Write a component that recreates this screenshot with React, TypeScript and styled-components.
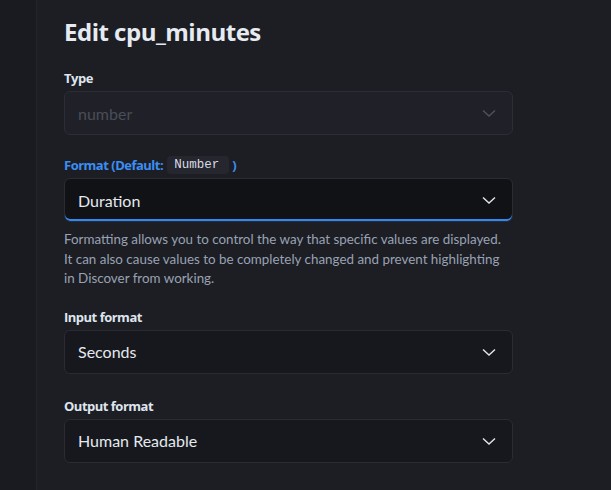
import styled, { createGlobalStyle } from 'styled-components'

const GlobalStyles = createGlobalStyle`
  html, body {
    margin: 0;
    padding: 0;
    background: #1d1e24;
    font-family: 'Lato', 'Open Sans', sans-serif;
    color: #dfe5ef;
  }
  * {
    box-sizing: border-box;
  }
`

const Page = styled.div`
  display: flex;
  height: 490px;
  overflow: hidden;
`

const SideStrip = styled.div`
  width: 37px;
  flex-shrink: 0;
  background: #1a1b20;
  border-right: 1px solid #24252c;
`

const Flyout = styled.div`
  width: 476px;
  padding: 16px 0 0 27px;
  display: flex;
  flex-direction: column;
`

const Title = styled.h2`
  margin: 0 0 20px;
  font-family: 'Open Sans', sans-serif;
  font-size: 24px;
  line-height: 32px;
  font-weight: 700;
  color: #e6ebf2;
  letter-spacing: -0.5px;
`

const Field = styled.div<{ $after: number }>`
  display: flex;
  flex-direction: column;
  margin-bottom: ${({ $after }) => $after}px;
`

const Label = styled.label<{ $active?: boolean }>`
  display: flex;
  align-items: center;
  height: 20px;
  font-family: 'Open Sans', sans-serif;
  font-size: 13px;
  font-weight: 700;
  letter-spacing: -0.5px;
  margin-bottom: 3px;
  color: ${({ $active }) => ($active ? '#3b8ef3' : '#dfe5ef')};
`

const Code = styled.code`
  display: inline-block;
  height: 18px;
  line-height: 18px;
  font-family: 'Liberation Mono', 'DejaVu Sans Mono', monospace;
  font-size: 12.5px;
  font-weight: 400;
  color: #d6dce6;
  background: #25262e;
  border-radius: 4px;
  padding: 0 10px 0 7px;
  margin: 0 3px 0 4px;
  letter-spacing: 0;
`

const Select = styled.div<{ $variant: 'disabled' | 'focus' | 'normal' }>`
  height: 44px;
  display: flex;
  align-items: center;
  justify-content: space-between;
  padding: 0 14px 0 13px;
  border-radius: 6px;
  border: 1px solid ${({ $variant }) => ($variant === 'disabled' ? '#2c2e36' : '#2b2c33')};
  background: ${({ $variant }) =>
    $variant === 'disabled' ? '#202128' : $variant === 'focus' ? '#111216' : '#17181d'};
  color: ${({ $variant }) => ($variant === 'disabled' ? '#4a4d57' : '#e4e9f0')};
  font-size: 16px;
  box-shadow: ${({ $variant }) => ($variant === 'focus' ? 'inset 0 -2px 0 #3089f0' : 'none')};
`

const Chevron = styled.svg<{ $dim?: boolean }>`
  width: 16px;
  height: 16px;
  color: ${({ $dim }) => ($dim ? '#4e525d' : '#e2e6ed')};
  margin-right: 1px;
`

const Help = styled.p`
  margin: 8px 0 0;
  font-size: 13.4px;
  line-height: 19.5px;
  color: #98a2b3;
  white-space: nowrap;
`

function Arrow({ dim }: { dim?: boolean }) {
  return (
    <Chevron $dim={dim} viewBox="0 0 16 16" fill="none">
      <path d="M2 5.5 L8 11 L14 5.5" stroke="currentColor" strokeWidth="1.4" />
    </Chevron>
  )
}

export default function App() {
  return (
    <>
      <GlobalStyles />
      <Page>
        <SideStrip />
        <Flyout>
          <Title>Edit cpu_minutes</Title>

          <Field $after={20}>
            <Label>Type</Label>
            <Select $variant="disabled">
              <span>number</span>
              <Arrow dim />
            </Select>
          </Field>

          <Field $after={18}>
            <Label $active>
              Format (Default:<Code>Number</Code>)
            </Label>
            <Select $variant="focus">
              <span>Duration</span>
              <Arrow />
            </Select>
            <Help>
              Formatting allows you to control the way that specific values are displayed.
              <br />
              It can also cause values to be completely changed and prevent highlighting
              <br />
              in Discover from working.
            </Help>
          </Field>

          <Field $after={22}>
            <Label>Input format</Label>
            <Select $variant="normal">
              <span>Seconds</span>
              <Arrow />
            </Select>
          </Field>

          <Field $after={22}>
            <Label>Output format</Label>
            <Select $variant="normal">
              <span>Human Readable</span>
              <Arrow />
            </Select>
          </Field>

          <Field $after={0}>
            <Label>Sample</Label>
          </Field>
        </Flyout>
      </Page>
    </>
  )
}
